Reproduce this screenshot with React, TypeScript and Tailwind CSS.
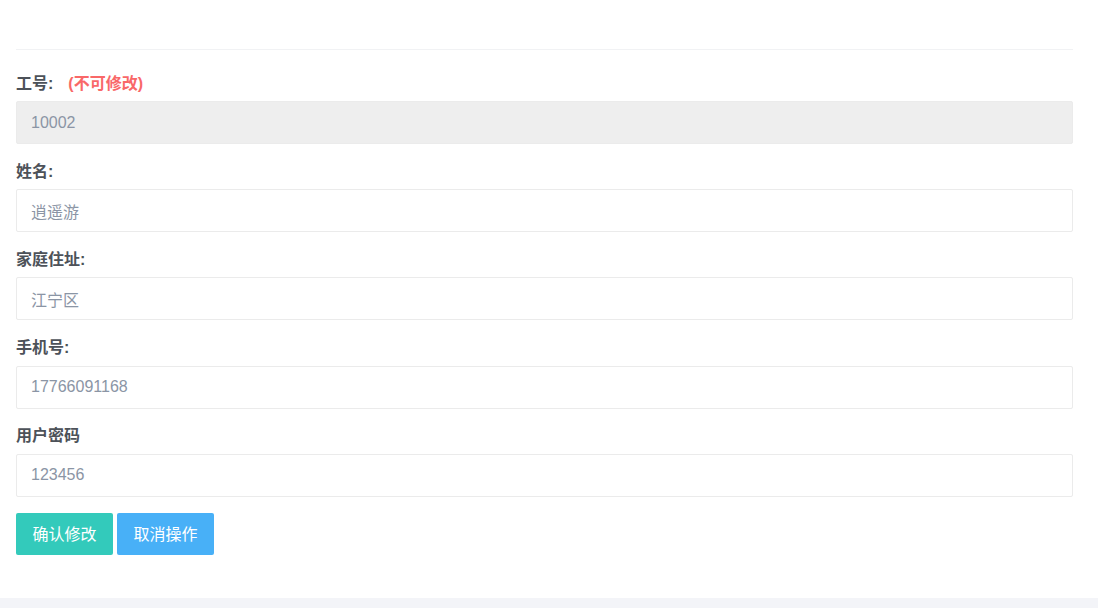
const font = '"Liberation Sans", "Noto Sans CJK SC", sans-serif';

const fields = [
  { label: '姓名:', value: '逍遥游' },
  { label: '家庭住址:', value: '江宁区' },
  { label: '手机号:', value: '17766091168' },
  { label: '用户密码', value: '123456' },
];

export default function App() {
  return (
    <div className="w-[1098px] h-[608px] bg-[#f3f4f8] text-[#4d5259]" style={{ fontFamily: font }}>
      <div className="bg-white h-[598px] pl-4 pr-[25px]">
        {/* header */}
        <div className="h-[50px] border-b border-[#f1f2f4]" />

        <div className="pt-[21px]">
          <div className="mb-[15px]">
            <label className="flex items-center h-6 pt-[1px] mb-[6px] text-base font-bold">
              工号:
              <span className="ml-[15px] text-[#f96868]">(不可修改)</span>
            </label>
            <input
              readOnly
              value="10002"
              className="w-full h-[43px] px-[14px] rounded-[2px] border border-[#ebebeb] bg-[#eeeeee] text-base text-[#8b95a5] outline-none"
            />
          </div>

          {fields.map(f => (
            <div key={f.label} className="mb-[15.3px]">
              <label className="flex items-center h-6 pt-[1px] mb-[6px] text-base font-bold">{f.label}</label>
              <input
                readOnly
                value={f.value}
                className="w-full h-[43px] px-[14px] rounded-[2px] border border-[#ebebeb] bg-white text-base text-[#8b95a5] outline-none"
              />
            </div>
          ))}

          <div className="flex gap-1 pt-[1px]">
            <button className="h-[42px] w-[97px] pt-[2px] rounded-[2px] bg-[#33cabb] text-white text-base">确认修改</button>
            <button className="h-[42px] w-[97px] pt-[2px] rounded-[2px] bg-[#48b0f7] text-white text-base">取消操作</button>
          </div>
        </div>
      </div>
    </div>
  );
}
